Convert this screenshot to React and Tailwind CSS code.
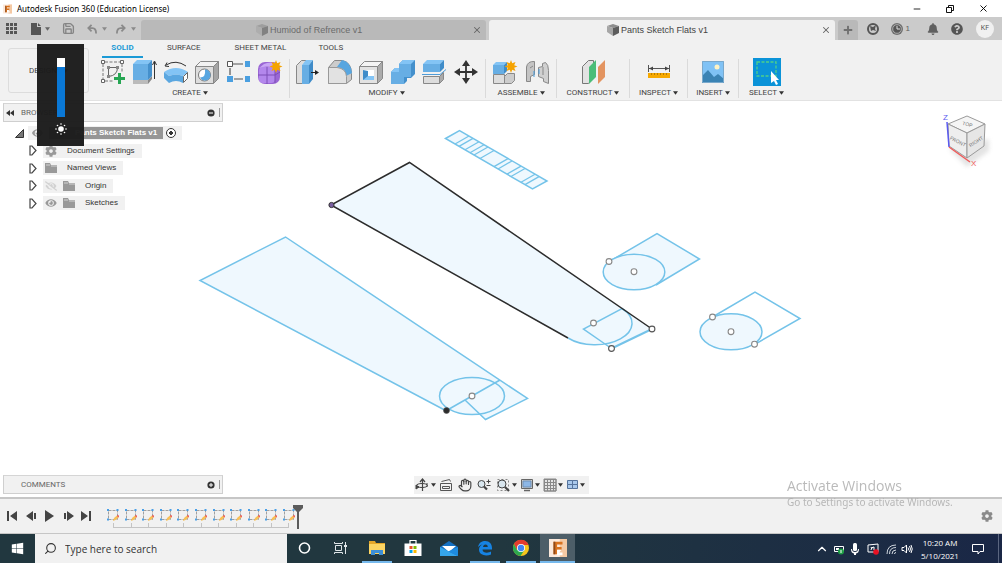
import React from "react";
import { FaCog, FaBell, FaQuestionCircle, FaEye, FaEyeSlash, FaWindows, FaPlus } from "react-icons/fa";
import { Search, X, Minus, ChevronUp, Hand, Save } from "lucide-react";

const Caret = ({ className = "text-[#333]" }) => (
  <svg viewBox="0 0 6 4" className={`h-[4px] w-[5px] shrink-0 ${className}`} fill="currentColor"><path d="M0 0h6L3 4z" /></svg>
);

const FusionLogo = ({ className }) => (
  <svg viewBox="0 0 20 20" className={className}>
    <path d="M0 0h20v20H0z" fill="#fbe9dc" />
    <path d="M12 0h8v20h-8z" fill="#f4c9a4" />
    <path d="M5 3h10v3H9v3h5v3H9v5H5z" fill="#d9731f" />
    <path d="M5 3h2v14H5z" fill="#8f4a1b" />
    <path d="M9 12h5l-3 3h4v3H9z" fill="#fff" />
  </svg>
);

const DocCube = ({ className }) => (
  <svg viewBox="0 0 12 12" className={className}>
    <path d="M0 2 6 0l6 2-6 2z" fill="#8d8d8d" />
    <path d="M0 2l6 2v8L0 8z" fill="#a6a6a6" />
    <path d="M6 4l6-2v7l-6 3z" fill="#5c5c5c" />
  </svg>
);

/* ---------- ribbon icons, 26 x 26 ---------- */
const icons = {
  sketch: (
    <>
      <path d="M3 5v15M5 3h15M5 22h9M22 5v9" stroke="#777" strokeWidth="1" strokeDasharray="3 1.500" fill="none" />
      <g fill="#fff" stroke="#666"><path d="M1.500 1.500h3v3h-3zM20.500 1.500h3v3h-3zM1.500 20.500h3v3h-3z" /></g>
      <path d="M8.500 8.500h9q0 8-9 9z" fill="none" stroke="#666" />
      <path d="M7 7h3v3H7zM16 7h3v3h-3zM7 16h3v3H7z" fill="#888" />
      <path d="M18 14h3v4h4v3h-4v4h-3v-4h-4v-3h4z" fill="#26a653" />
    </>
  ),
  extrude: (
    <>
      <path d="M2 21h15v4H2z" fill="#bbb" /><path d="M17 21l4-4v3l-4 5z" fill="#888" />
      <path d="M2 5h15v16H2z" fill="#67aee4" /><path d="M2 5l4-4h15l-4 4z" fill="#83c4f5" /><path d="M17 5l4-4v16l-4 4z" fill="#4490cc" />
      <path d="M23.500 20V3m-2 3 2-4 2 4" stroke="#333" fill="none" />
    </>
  ),
  revolve: (
    <>
      <path d="M1 13q12-8 24 0l-5 4q-7-3-14 0z" fill="#83c4f5" />
      <path d="M1 13l5 4v7l-5-5zM6 17q7-3 14 0v7q-7-4-14 0z" fill="#5ba7e0" />
      <path d="M20.500 17.500l4-4v6l-4 4z" fill="#fff" stroke="#666" />
      <path d="M3 6q10-6 20 1M2 7l2-3.500M2 7l4 .5" stroke="#333" fill="none" />
    </>
  ),
  hole: (
    <>
      <path d="M1.500 7.500h18v17h-18z" fill="#ddd" stroke="#888" /><path d="M1.500 7.500l5-5h18l-5 5z" fill="#f2f2f2" stroke="#888" /><path d="M19.500 7.500l5-5v17l-5 5z" fill="#a5a5a5" stroke="#888" />
      <circle cx="10.500" cy="16" r="6" fill="#fff" stroke="#777" /><path d="M11 10.500a5.500 5.500 0 1 1-5 8q6 0 5-8z" fill="#58a6e0" />
    </>
  ),
  pattern: (
    <>
      <path d="M7 5h10M8 20h9M4 9v7" stroke="#555" strokeWidth="1.200" />
      <path d="M1.500 2.500h5v5h-5z" fill="#fff" stroke="#555" />
      <path d="M19 2h5v6h-5zM19 17h5v6h-5zM1 17h6v6H1z" fill="#4a9fe0" />
    </>
  ),
  form: (
    <>
      <rect x="1" y="3" width="22" height="22" rx="7" fill="#9a66d4" />
      <rect x="2" y="8" width="16" height="16" rx="4" fill="#b387ec" />
      <path d="M2 9q8-3 16 0l4-4q-9-3-15 0z" fill="#c9a6f5" />
      <path d="M10 8v17M1 16h17l5-3M18 9v15" stroke="#7d4fb6" fill="none" />
      <path d="M19 1l1.200 3.200L23.500 3l-1.300 3.200L25.500 7.500l-3.300 1.200 1.300 3.300-3.300-1.200L19 14l-1.200-3.200-3.300 1.200 1.300-3.300-3.300-1.200 3.300-1.300L14.500 3l3.300 1.200z" fill="#f5a300" />
    </>
  ),
  press: (
    <>
      <path d="M1.500 6.500l5-5h5v23h-10z" fill="#ddd" stroke="#888" />
      <path d="M7 6h7v19H7z" fill="#67aee4" /><path d="M7 6l4-5h7l-4 5z" fill="#83c4f5" /><path d="M14 6l4-5v19l-4 5z" fill="#3f8cc9" />
      <path d="M16 13.500h5" stroke="#222" /><path d="M20 11l4 2.500-4 2.500z" fill="#222" />
    </>
  ),
  fillet: (
    <>
      <path d="M1.500 8.500l6-7h8q9 2 9 13v6l-5 4h-18z" fill="#ccc" stroke="#888" />
      <path d="M10 8l5-7q9 2 10 13l-6 3q0-8-9-9z" fill="#58a6e0" /><path d="M1.500 8.500H10q9 1 9.500 9v7h-18z" fill="#e2e2e2" stroke="#999" />
    </>
  ),
  shell: (
    <>
      <path d="M1.500 7.500h18v17h-18z" fill="#e2e2e2" stroke="#888" /><path d="M1.500 7.500l5-5h18l-5 5z" fill="#f4f4f4" stroke="#888" /><path d="M19.500 7.500l5-5v17l-5 5z" fill="#ababab" stroke="#888" />
      <path d="M5 11h11v10H5z" fill="#fff" /><path d="M5 11l5 1v5l6 4H5z" fill="#3f8cc9" /><path d="M5 21l5-4h6v4z" fill="#83c4f5" />
    </>
  ),
  combine: (
    <>
      <path d="M9 5l4-4h12v14l-4 4h-4v3l-3 3H1V13l4-4h4z" fill="#4490cc" />
      <path d="M9 5h12v13h-7v7H1V13h8z" fill="#67aee4" />
      <path d="M9 5l4-4h12l-4 4zM1 13l4-4h4v4z" fill="#83c4f5" />
    </>
  ),
  split: (
    <>
      <path d="M2 5h17v8H2z" fill="#67aee4" /><path d="M2 5l4-4h17l-4 4z" fill="#83c4f5" /><path d="M19 5l4-4v8l-4 4z" fill="#3f8cc9" />
      <path d="M1 15.500h18l6-5" stroke="#4e9cd8" fill="none" />
      <path d="M2.500 17.500h16v7h-16z" fill="#ddd" stroke="#888" /><path d="M18.500 17.500l4-4v7l-4 4z" fill="#aaa" stroke="#888" />
    </>
  ),
  move: (
    <>
      <path d="M13 4v18M4 13h18" stroke="#333" strokeWidth="1.800" />
      <path d="M13 1l4 6H9zM13 25l4-6H9zM1 13l6-4v8zM25 13l-6-4v8z" fill="#333" />
    </>
  ),
  component: (
    <>
      <path d="M1.500 15.500h11v9h-11z" fill="#ddd" stroke="#888" /><path d="M12.500 17.500l3-3h7v7l-3 3h-7z" fill="#ccc" stroke="#888" />
      <path d="M1 6h11v9H1z" fill="#67aee4" /><path d="M1 6l3-3h11l-3 3z" fill="#83c4f5" /><path d="M12 6l3-3v9l-3 3z" fill="#3f8cc9" />
      <path d="M19 1l1.200 3.200L23.500 3l-1.300 3.200L25.500 7.500l-3.300 1.200 1.300 3.300-3.300-1.200L19 14l-1.200-3.200-3.300 1.200 1.300-3.300-3.300-1.200 3.300-1.300L14.500 3l3.300 1.200z" fill="#f5a300" />
    </>
  ),
  joint: (
    <>
      <path d="M2.500 22.500V8q1-6 8-5.500v13l-4 2v5z" fill="#c4c4c4" stroke="#888" /><path d="M14.500 8.500l4-1v-3l3-1q3 2 3 8v13l-5-2v-3l-5-2z" fill="#d0d0d0" stroke="#888" />
      <path d="M6 9l3-2M19 8v8" stroke="#888" fill="none" /><path d="M10 12v6M15 10v5" stroke="#4a9fe0" />
    </>
  ),
  construct: (
    <>
      <path d="M2.500 7.500l6-6h5v17l-5 6h-6z" fill="#e2e2e2" stroke="#777" /><path d="M9 8l7-7v17l-7 7z" fill="#4bbd78" /><path d="M18 8l7-7v17l-7 7z" fill="#e39460" />
    </>
  ),
  measure: (
    <>
      <path d="M2.500 6v7M23.500 6v7M3 9.500h20" stroke="#555" /><path d="M3 9.500l4-2v4zM23 9.500l-4-2v4z" fill="#444" />
      <path d="M2 14h22v5H2z" fill="#f7a900" /><path d="M5.500 14v2M8.500 14v2M11.500 14v2M14.500 14v2M17.500 14v2M20.500 14v2" stroke="#b87c00" />
    </>
  ),
  insert: (
    <>
      <path d="M2 2h22v22H2z" fill="#80c2f5" /><circle cx="17" cy="8" r="2.500" fill="#fff3c4" />
      <path d="M2 17l6-6 6 7 4-3 6 5v4H2z" fill="#3b83b4" /><path d="M2.500 2.500h21v21h-21z" stroke="#7aa9cc" fill="none" />
    </>
  ),
  select: (
    <>
      <path d="M3 3h19v14H3z" fill="none" stroke="#4fd08a" strokeWidth="1.300" strokeDasharray="3 1.500" />
      <path d="M17 12v12l3-2 2 4 2-1-2-4h3z" fill="#fff" />
    </>
  ),
};

const RibbonIcon = ({ name }) => (
  <button type="button" aria-label={name} className={name === "select" ? "bg-[#0b93d8] p-px" : ""}>
    <svg viewBox="0 0 26 26" className="h-[26px] w-[26px]">{icons[name]}</svg>
  </button>
);

const groups = [
  { label: "CREATE", list: ["sketch", "extrude", "revolve", "hole", "pattern", "form"], box: "w-[193px] border-r", row: "justify-between pl-[3px] pr-[6px]", text: "pr-[6px]" },
  { label: "MODIFY", list: ["press", "fillet", "shell", "combine", "split", "move"], box: "w-[196px] border-r", row: "justify-between pl-[5px] pr-[6px]", text: "pr-[2px]" },
  { label: "ASSEMBLE", list: ["component", "joint"], box: "w-[71px] border-r", row: "justify-center gap-[6px]" },
  { label: "CONSTRUCT", list: ["construct"], box: "w-[73px] border-r", row: "justify-center" },
  { label: "INSPECT", list: ["measure"], box: "w-[58px] border-r", row: "justify-center" },
  { label: "INSERT", list: ["insert"], box: "w-[51px] border-r", row: "justify-center" },
  { label: "SELECT", list: ["select"], box: "w-[55px]", row: "justify-center" },
];

function TitleBar() {
  return (
    <header className="flex h-[17px] items-center bg-white pl-[3px] text-black">
      <FusionLogo className="h-[10px] w-[9px]" />
      <h1 className="ml-[5px] flex-1 font-['Noto_Sans',sans-serif] text-[8px] leading-[12px]">Autodesk Fusion 360 (Education License)</h1>
      <div className="flex items-center gap-[23px] pr-[13px]">
        <button type="button" aria-label="Minimize"><Minus className="h-[10px] w-[10px]" strokeWidth={2} /></button>
        <button type="button" aria-label="Restore">
          <svg viewBox="0 0 10 10" className="h-[10px] w-[10px]" fill="none" stroke="#111"><path d="M1.500 3.500h5v5h-5zM3.500 3V1.500h5v5H7" /></svg>
        </button>
        <button type="button" aria-label="Close"><X className="h-[11px] w-[11px]" strokeWidth={2} /></button>
      </div>
    </header>
  );
}

function DocTab({ title, active }) {
  return (
    <div className={`flex h-[20px] flex-1 items-center rounded-t-[3px] pr-[4px] ${active ? "bg-[#f0f0f0] text-[#444]" : "bg-[#b9b9b9] text-[#6b6b6b]"}`}>
      <button type="button" className="flex flex-1 items-center justify-center gap-[2px] pl-[5px] font-['Liberation_Sans',sans-serif] text-[9px] leading-[12px]">
        <DocCube className={`h-[12px] w-[12px] ${active ? "" : "opacity-60"}`} />
        {title}
      </button>
      <button type="button" aria-label="Close tab"><X className="h-[10px] w-[10px] text-[#666]" strokeWidth={2.5} /></button>
    </div>
  );
}

function TabBar() {
  return (
    <nav className="flex h-[23px] items-end bg-[#cbcbcb] text-[#606060]">
      <div className="flex h-[23px] w-[141px] items-center">
        <button type="button" aria-label="Data panel" className="ml-[6px]">
          <svg viewBox="0 0 11 11" className="h-[11px] w-[11px]" fill="#555"><path d="M0 0h3v3H0zM4 0h3v3H4zM8 0h3v3H8zM0 4h3v3H0zM4 4h3v3H4zM8 4h3v3H8zM0 8h3v3H0zM4 8h3v3H4zM8 8h3v3H8z" /></svg>
        </button>
        <button type="button" aria-label="File" className="ml-[14px] flex items-center gap-[4px]">
          <svg viewBox="0 0 10 12" className="h-[12px] w-[10px]" fill="#555"><path d="M0 0h6v4h4v8H0z" /><path d="M7 0l3 3H7z" /></svg>
          <Caret className="text-[#666]" />
        </button>
        <button type="button" aria-label="Save" className="ml-[12px] text-[#858585]"><Save className="h-[13px] w-[13px]" strokeWidth={2.5} /></button>
        <button type="button" aria-label="Undo" className="ml-[12px] flex items-center gap-[5px] text-[#8a8a8a]">
          <svg viewBox="0 0 11 11" className="h-[10px] w-[10px]" fill="none" stroke="currentColor" strokeWidth="2"><path d="M5 1 1.500 4.500 5 8M2 4.500h4q4 0 4 6" /></svg>
          <Caret className="text-[#8a8a8a]" />
        </button>
        <button type="button" aria-label="Redo" className="ml-[9px] flex items-center gap-[5px] text-[#8a8a8a]">
          <svg viewBox="0 0 11 11" className="h-[10px] w-[10px]" fill="none" stroke="currentColor" strokeWidth="2"><path d="M6 1l3.500 3.500L6 8M9 4.500H5q-4 0-4 6" /></svg>
          <Caret className="text-[#8a8a8a]" />
        </button>
      </div>
      <div className="flex flex-1 gap-[3px]">
        <DocTab title="Humiod of Refrence v1" />
        <DocTab title="Pants Sketch Flats v1" active />
      </div>
      <button type="button" aria-label="New tab" className="ml-[3px] flex h-[20px] w-[20px] items-center justify-center rounded-t-[3px] bg-[#b9b9b9]">
        <FaPlus className="h-[10px] w-[10px] text-[#707070]" />
      </button>
      <div className="flex h-[23px] items-center pl-[9px] pr-[8px]">
        <button type="button" aria-label="Extensions">
          <svg viewBox="0 0 12 12" className="h-[12px] w-[12px]"><circle cx="6" cy="6" r="5" fill="#cbcbcb" stroke="#555" strokeWidth="2" /><path d="M3 3l3 1 3-2-1 4 1 2-3-1-2 1z" fill="#555" /></svg>
        </button>
        <button type="button" className="ml-[12px] flex items-center gap-[3px] font-['Liberation_Sans',sans-serif] text-[8px]">
          <svg viewBox="0 0 12 12" className="h-[12px] w-[12px]"><circle cx="6" cy="6" r="6" fill="#707070" /><circle cx="6" cy="6" r="4.300" fill="#555" stroke="#bbb" strokeWidth=".8" /><path d="M6 3v3h3" stroke="#ddd" fill="none" /></svg>
          1
        </button>
        <button type="button" aria-label="Notifications" className="ml-[17px]"><FaBell className="h-[12px] w-[12px]" /></button>
        <button type="button" aria-label="Help" className="ml-[12px]"><FaQuestionCircle className="h-[12px] w-[12px] text-[#555]" /></button>
        <button type="button" className="ml-[13px] flex h-[18px] w-[18px] items-center justify-center rounded-full bg-[#f0f0f0] font-['Roboto',sans-serif] text-[7px] text-[#555]">KF</button>
      </div>
    </nav>
  );
}

function Ribbon() {
  return (
    <section className="flex h-[61px] border-b border-[#e2e2e2] bg-[#f1f1f1] font-['Roboto',sans-serif] text-[8px] leading-[10px] text-[#444]">
      <button type="button" className="ml-[8px] mt-[8px] flex h-[45px] w-[81px] items-center justify-center gap-[6px] rounded-[3px] border border-[#dcdcdc]">
        DESIGN <Caret />
      </button>
      <div className="ml-[8px] flex flex-1 flex-col">
        <div className="flex h-[18px] pt-[3px]">
          <button type="button" className="ml-[5px] w-[41px] border-b-2 border-[#1b9ad6] pb-[3px] font-bold text-[#1b9ad6]">SOLID</button>
          <button type="button" className="ml-[24px] pb-[5px]">SURFACE</button>
          <button type="button" className="ml-[34px] pb-[5px]">SHEET METAL</button>
          <button type="button" className="ml-[32px] pb-[5px]">TOOLS</button>
        </div>
        <div className="flex pt-px">
          {groups.map((g) => (
            <div key={g.label} className={`flex h-[39px] flex-col border-[#dadada] ${g.box}`}>
              <div className={`flex h-[26px] items-center ${g.row}`}>
                {g.list.map((n) => <RibbonIcon key={n} name={n} />)}
              </div>
              <button type="button" className={`mt-[3px] flex items-center justify-center gap-[2px] ${g.text ?? ""}`}>{g.label}<Caret /></button>
            </div>
          ))}
        </div>
      </div>
    </section>
  );
}

const Folder = () => (
  <svg viewBox="0 0 12 10" className="h-[10px] w-[12px] shrink-0" fill="#999"><path d="M0 0h5l1 2h6v8H0z" /><path d="M1 2h4M6 3h6" stroke="#eee" strokeWidth=".7" /></svg>
);
const Expander = () => (
  <svg viewBox="0 0 8 11" className="h-[11px] w-[8px]" fill="#fff" stroke="#444" strokeWidth="1.200"><path d="M1 1h2l4 4.500L3 10H1z" /></svg>
);

function TreeRow({ children, label }) {
  return (
    <li className="flex h-[14px] items-center pl-[26px]">
      <button type="button" aria-label={`Expand ${label}`} className="mr-[6px]"><Expander /></button>
      <div className="flex h-[14px] items-center bg-[#f1f1f1] pl-[2px] pr-[7px]">
        {children}
        <span>{label}</span>
      </div>
    </li>
  );
}

function PanelHeader({ title, left, sign }) {
  return (
    <div className="flex h-[19px] items-center border border-t-[#d5d5d5] border-[#cfcfcf] bg-[#f1f1f1] font-['Roboto',sans-serif] text-[8px] leading-[10px] text-[#666]">
      <span className="flex w-[17px] pl-[2px]">{left}</span>
      <h2 className="flex-1">{title}</h2>
      <button type="button" aria-label={`Toggle ${title}`} className="mr-[4px]">
        <svg viewBox="0 0 8 8" className="h-[8px] w-[8px]"><circle cx="4" cy="4" r="3.600" fill="#333" /><path d={sign} stroke="#fff" /></svg>
      </button>
      <span className="mr-[1px] h-[9px] w-[2px] border-l border-[#999]" />
    </div>
  );
}

function Browser() {
  return (
    <aside className="w-[220px] text-[#333]">
      <PanelHeader
        title="BROWSER"
        sign="M2 4h4"
        left={<svg viewBox="0 0 8 6" className="h-[6px] w-[8px]" fill="#333"><path d="M4 0v6L0 3zM8 0v6L4 3z" /></svg>}
      />
      <ul className="mt-[4px] flex h-[84px] flex-col justify-between font-['Liberation_Sans',sans-serif] text-[8px] leading-[10px]">
        <li className="flex h-[14px] items-center pl-[12px]">
          <button type="button" aria-label="Collapse root">
            <svg viewBox="0 0 9 9" className="h-[9px] w-[9px]"><path d="M8.500.5v8h-8z" fill="#777" stroke="#333" /></svg>
          </button>
          <div className="ml-[4px] flex h-[14px] items-center bg-[#f1f1f1] pl-[4px] pr-[6px]">
            <FaEye className="h-[10px] w-[11px] text-[#999]" />
            <span className="ml-[6px] flex h-[12px] items-center bg-[#969696] pl-[6px] pr-[6px] font-bold text-white">
              <DocCube className="mr-[11px] h-[9px] w-[9px]" />Pants Sketch Flats v1
            </span>
            <input type="radio" aria-label="Activate component" defaultChecked className="ml-[3px] h-[10px] w-[10px] appearance-none rounded-full border border-[#333] bg-[radial-gradient(circle,#333_2px,#fff_2px)]" />
          </div>
        </li>
        <TreeRow label="Document Settings"><FaCog className="mr-[10px] h-[12px] w-[12px] text-[#999]" /></TreeRow>
        <TreeRow label="Named Views"><span className="mr-[10px]"><Folder /></span></TreeRow>
        <TreeRow label="Origin"><FaEyeSlash className="mr-[6px] h-[10px] w-[12px] text-[#d2d2d2]" /><span className="mr-[10px]"><Folder /></span></TreeRow>
        <TreeRow label="Sketches"><FaEye className="mr-[6px] h-[10px] w-[12px] text-[#999]" /><span className="mr-[10px]"><Folder /></span></TreeRow>
      </ul>
    </aside>
  );
}

const stripLines = [455, 459, 465, 470, 474, 480, 494, 498, 507, 511, 521, 525];

function SketchView() {
  return (
    <svg viewBox="0 101 1002 396" preserveAspectRatio="xMidYMid meet" className="absolute inset-0 h-full w-full" fill="none" stroke="#74c3e9" strokeWidth="1.500">
      <path d="M445.500 138.500l14-8 87.500 50.500-14.500 8z" fill="#eff8fe" />
      {stripLines.map((x) => {
        const y = 138.5 + (x - 445.5) * 0.58;
        return <path key={x} d={`M${x} ${y}l14-8`} strokeWidth="1.300" />;
      })}

      <path d="M331 205l78.500-42.500L652 329l-40.500 19.500-8-5Q584 346 568 338z" fill="#eff8fe" stroke="none" />
      <path d="M568 338A37 21.500 0 0 0 622 308.500L583.500 329l28 19.500" />
      <path d="M611.500 348.500L652 329" strokeWidth="2" />
      <path d="M568 338L331 205l78.500-42.500L652 329" stroke="#2c2c2c" />

      <path d="M285.500 237L200 280.500 446.500 411 465 400l20.500 19.500 42-21z" fill="#eff8fe" stroke="none" />
      <ellipse cx="472" cy="396" rx="32.500" ry="18.500" fill="#eff8fe" />
      <path d="M446.500 411L200 280.500 285.500 237l242 161.500-42 21L465 400M446.500 410.500L500 380" />

      <path d="M609.500 261.500l47.500-28 42.500 25.500-43.500 26" fill="#eff8fe" />
      <ellipse cx="634" cy="272" rx="30.800" ry="17.800" fill="#eff8fe" />

      <path d="M712.500 317l42.500-25 45 26.500-45.500 26" />
      <ellipse cx="731" cy="331.800" rx="31" ry="18" fill="#eff8fe" />

      <g fill="#fff" stroke="#888" strokeWidth="1.100">
        <circle cx="593.500" cy="323" r="2.900" /><circle cx="611.500" cy="348.500" r="2.900" stroke="#555" /><circle cx="652" cy="329" r="2.900" stroke="#555" />
        <circle cx="472" cy="396" r="2.900" /><circle cx="609" cy="261.500" r="2.900" /><circle cx="634" cy="271.700" r="2.900" />
        <circle cx="712.500" cy="317" r="2.900" /><circle cx="731" cy="331.700" r="2.900" /><circle cx="754.500" cy="344.200" r="2.900" />
      </g>
      <circle cx="331.500" cy="205" r="2.600" fill="#7a5fa0" stroke="#333" strokeWidth="1" />
      <circle cx="446.500" cy="410.500" r="3" fill="#2c2c2c" stroke="#555" strokeWidth=".6" />
    </svg>
  );
}

function ViewCube() {
  return (
    <svg viewBox="0 0 52 62" className="absolute right-[9px] top-[8px] h-[62px] w-[52px]" fontFamily="Liberation Sans, sans-serif">
      <defs><filter id="cubeShadow"><feGaussianBlur stdDeviation="2" /></filter></defs>
      <path d="M8 40l18 18 22-16V30z" fill="#bbb" opacity=".4" filter="url(#cubeShadow)" />
      <g stroke="#9a9a9a" strokeLinejoin="round">
        <path d="M7 15L26 7l18 8-18 9z" fill="#f5f5f5" />
        <path d="M7 15l19 9v25L8 37z" fill="#eee" />
        <path d="M26 24l18-9-1 22-17 12z" fill="#e6e6e6" />
      </g>
      <g fontSize="5" fill="#777" textAnchor="middle">
        <text transform="translate(26 17) rotate(14)">TOP</text>
        <text transform="translate(16 34) rotate(28)">FRONT</text>
        <text transform="translate(36 34) rotate(-33)">RIGHT</text>
      </g>
      <path d="M6 13l2 25" stroke="#5a5af0" strokeWidth="1.500" /><path d="M8 38l21 15" stroke="#ef5a5a" strokeWidth="1.500" />
      <text x="2" y="11" fontSize="8" fill="#5a5af0">Z</text>
      <text x="30" y="57" fontSize="8" fill="#ef5a5a">X</text>
    </svg>
  );
}

function NavBar() {
  const cls = "h-[14px] w-[14px]";
  return (
    <div className="flex h-[18px] items-center bg-[#f1f1f1] pl-[1px] pr-[4px] text-[#444]">
      <button type="button" aria-label="Orbit" className="flex items-center gap-[2px]">
        <svg viewBox="0 0 14 14" className={cls} fill="none" stroke="#444"><path d="M7.500 2v11M5 4l2.500-3L10 4" strokeWidth="1.200" /><ellipse cx="7" cy="7.500" rx="5.500" ry="2" /><path d="M1 7l3 2-3 2zM12 5v4" fill="#444" /></svg>
        <Caret />
      </button>
      <button type="button" aria-label="Look at" className="ml-[3px]">
        <svg viewBox="0 0 14 14" className={cls} fill="none" stroke="#555"><path d="M1.500 5.500h11v7h-11zM3.500 8.500h7v2h-7zM2.500 3.500l8-2 1 2" /></svg>
      </button>
      <button type="button" aria-label="Pan" className="ml-[5px]"><Hand className={cls} strokeWidth={2} /></button>
      <button type="button" aria-label="Zoom" className="ml-[5px]">
        <svg viewBox="0 0 14 14" className={cls} fill="none" stroke="#444"><circle cx="4.500" cy="6" r="3.500" fill="#d9e6ee" /><path d="M7 8.500l3 3" strokeWidth="2.200" /><path d="M9.500 3.500h4M11.500 1.500v4M9.500 7.500h4" /></svg>
      </button>
      <button type="button" aria-label="Fit" className="ml-[5px] flex items-center gap-[2px]">
        <svg viewBox="0 0 14 14" className={cls} fill="none" stroke="#444"><path d="M1.500 1.500h11v11h-11z" stroke="#888" strokeDasharray="2 2" /><circle cx="6" cy="6" r="4" fill="#d9e6ee" /><path d="M9 9l4 4" strokeWidth="2.200" /></svg>
        <Caret />
      </button>
      <button type="button" aria-label="Display" className="ml-[3px] flex items-center gap-px">
        <svg viewBox="0 0 14 14" className={cls} fill="none" stroke="#666"><path d="M1.500 1.500h11v9h-11z" fill="#ccc" /><path d="M3 3h8v6H3z" fill="#8db7e6" stroke="#6f8fb5" /><path d="M4 12.500h6" strokeWidth="1.500" /></svg>
        <Caret />
      </button>
      <button type="button" aria-label="Grid" className="ml-[3px] flex items-center gap-px">
        <svg viewBox="0 0 14 14" className={cls} stroke="#888"><path d="M1 1h12v12H1z" fill="#e4e4e4" /><path d="M1 1.500h12M1 4.500h12M1 7.500h12M1 10.500h12M1 13h12M1.500 1v12M4.500 1v12M7.500 1v12M10.500 1v12M13 1v12" /></svg>
        <Caret />
      </button>
      <button type="button" aria-label="Viewports" className="ml-[3px] flex items-center gap-px">
        <svg viewBox="0 0 13 14" className="h-[14px] w-[13px]" fill="#a9c8ec" stroke="#55739c"><path d="M1.500 2.500h5v4h-5zM6.500 2.500h5v4h-5zM1.500 6.500h5v4h-5zM6.500 6.500h5v4h-5z" /></svg>
        <Caret />
      </button>
    </div>
  );
}

const playback = [
  ["First", "M1 1h2v10H1zM11 1v10L4 6z"],
  ["Back", "M8 1v10L1 6zM9 3h2v6H9z"],
  ["Play", "M2 0v12l9-6z"],
  ["Forward", "M5 1v10l7-5zM2 3h2v6H2z"],
  ["Last", "M9 1h2v10H9zM1 1v10l7-5z"],
];

function Timeline() {
  return (
    <section className="flex h-[37px] items-start border-b border-t-2 border-[#c6c6c6] bg-[#f1f1f1]">
      <div className="flex w-[86px] justify-between pl-0 pt-[11px] ml-[6px]">
        {playback.map(([name, d]) => (
          <button key={name} type="button" aria-label={name} className="flex w-[12px] justify-center">
            <svg viewBox="0 0 12 12" className="h-[12px] w-[12px]" fill="#444"><path d={d} /></svg>
          </button>
        ))}
      </div>
      <div className="ml-[15px] w-[188px] pt-[10px]">
        <ul className="flex justify-between">
          {Array.from({ length: 11 }, (_, i) => (
            <li key={i}>
              <button type="button" aria-label={`Sketch ${i + 1}`} className="block">
                <svg viewBox="0 0 12 12" className="h-[12px] w-[12px]">
                  <path d="M1.500 1.500h9v9h-9z" fill="none" stroke="#a0a0a0" strokeDasharray="3 1" />
                  <path d="M0 0h2v2H0zM9.500 0h2v2h-2zM0 9.500h2v2H0z" fill="#4a9fe6" />
                  <path d="M6 12l1-3 3-2.500 1.500 2L8.500 11z" fill="#f8c056" /><path d="M10 6.500l1.500-.5.500 2-1 .5z" fill="#ee4a4a" />
                </svg>
              </button>
            </li>
          ))}
        </ul>
        <div className="mx-[6px] flex h-[7px] justify-between border-b border-[#c4c4c4]">
          {Array.from({ length: 11 }, (_, i) => <span key={i} className="mt-[2px] w-px bg-[#c4c4c4]" />)}
        </div>
      </div>
      <svg viewBox="0 0 10 24" className="-ml-[2px] mt-[6px] h-[24px] w-[10px]" fill="#5c5c5c"><path d="M0 0h10v3L6 7v17H4V7L0 3z" /></svg>
      <button type="button" aria-label="Timeline settings" className="ml-auto mr-[9px] mt-[11px]"><FaCog className="h-[12px] w-[12px] text-[#8a8a8a]" /></button>
    </section>
  );
}

const apps = [
  { name: "Cortana", art: <circle cx="9.500" cy="10" r="5" fill="none" stroke="#fff" strokeWidth="1.600" /> },
  { name: "Task view", art: <g fill="none" stroke="#dfe5e8"><path d="M4.500 7.500h6v5h-6zM3.500 4v1.500h8V4M3.500 16v-1.500h8V16M14.500 4v12" /><path d="M13 8h3" strokeWidth="2" /></g> },
  { name: "File Explorer", open: true, art: <><path d="M2 3h6l1 2h9v11H2z" fill="#e5a72a" /><path d="M2 6h16v10H2z" fill="#fcd462" /><path d="M4 17v-5h12v5h-4v-2H8v2z" fill="#3d8fd6" /></> },
  { name: "Store", art: <><path d="M7 6V2.500h6V6" fill="none" stroke="#fff" strokeWidth="1.200" /><path d="M1.500 5.500h17v12.500h-17z" fill="#fff" /><path d="M6.500 8h3v3h-3z" fill="#e8502b" /><path d="M10.500 8h3v3h-3z" fill="#7fba00" /><path d="M6.500 12h3v3h-3z" fill="#00a4ef" /><path d="M10.500 12h3v3h-3z" fill="#ffb900" /></> },
  { name: "Mail", art: <><path d="M1 9l9-6 9 6v9H1z" fill="#1471c4" /><path d="M3 8h14l-7 6z" fill="#fff" /><path d="M1 9l18 9H1z" fill="#35a6ec" /><path d="M19 9v9L9 13.500z" fill="#1e8be0" /></> },
  { name: "Edge", open: true, art: <path d="M3 9C4 4.500 7 3 10.300 3 14.500 3 17 6 17 10v1.500H7.500c0 3.500 5.500 4 8.500 2v3c-5 2-12 .8-12-5 0-2.500 1.500-4 3.500-5C5 7 3 9 3 9zm5 0h4.800c0-3.300-4.300-3.300-4.800 0z" fill="#1683e2" /> },
  { name: "Chrome", open: true, art: <><circle cx="10" cy="10" r="8" fill="#f6c51c" /><path d="M3 6a8 8 0 0 1 14 0l.5 1H10L6 12z" fill="#e33b2e" /><path d="M3 6a8 8 0 0 0 6.500 12l4-6L6 12z" fill="#2da94f" /><circle cx="10" cy="10" r="4" fill="#fff" /><circle cx="10" cy="10" r="3.200" fill="#4285f4" /></> },
];

function Taskbar() {
  return (
    <footer className="flex h-[29px] bg-linear-to-r from-[#21373f] from-50% to-[#1a2746] font-['Open_Sans',sans-serif] text-white">
      <button type="button" aria-label="Start" className="flex w-[35px] items-center justify-center"><FaWindows className="h-[13px] w-[13px]" /></button>
      <label className="flex w-[252px] items-center bg-[#f1f1f1] pl-[9px] text-[#333]">
        <Search className="h-[13px] w-[13px] -scale-x-100" strokeWidth={2} />
        <input type="text" aria-label="Search" placeholder="Type here to search" className="ml-[8px] w-[200px] bg-transparent text-[10px] leading-[14px] outline-none placeholder:text-[#333] placeholder:opacity-100" />
      </label>
      {apps.map((a) => (
        <button key={a.name} type="button" aria-label={a.name} className="flex w-[36px] flex-col items-center justify-between">
          <svg viewBox="0 0 20 20" className="mt-[4px] h-[20px] w-[20px]">{a.art}</svg>
          <span className={`h-[2px] w-[30px] ${a.open ? "bg-[#76b9ed]" : ""}`} />
        </button>
      ))}
      <button type="button" aria-label="Fusion 360" className="ml-px flex w-[35px] flex-col items-center justify-between bg-[#4d5e68]">
        <FusionLogo className="mt-[5px] h-[18px] w-[18px]" />
        <span className="h-[2px] w-full bg-[#76b9ed]" />
      </button>
      <div className="ml-auto flex items-center">
        <button type="button" aria-label="Hidden icons"><ChevronUp className="h-[14px] w-[14px]" strokeWidth={2} /></button>
        <svg viewBox="0 0 12 12" className="ml-[4px] h-[12px] w-[12px]"><path d="M1.500 3.500h9v5h-9z" fill="none" stroke="#fff" /><path d="M3 5h3v2H3z" fill="#fff" /><circle cx="8" cy="8.500" r="3" fill="#1fa045" /><path d="M8 7v3" stroke="#fff" /></svg>
        <svg viewBox="0 0 8 12" className="ml-[6px] h-[12px] w-[8px]" fill="#fff"><rect x="2" y="0" width="4" height="8" rx="1.500" /><path d="M0 6h1q0 3 3 3t3-3h1q0 4-3 4.500V12H3v-1.500Q0 10 0 6z" /></svg>
        <svg viewBox="0 0 12 12" className="ml-[8px] h-[12px] w-[12px]"><path d="M1 2l10-1v8H1z" fill="none" stroke="#fff" /><path d="M4 7q0-3 3-3v3M4 4l1 2" fill="none" stroke="#fff" /><circle cx="9" cy="9" r="2.800" fill="#e81123" /></svg>
        <svg viewBox="0 0 12 12" className="ml-[6px] h-[12px] w-[12px]" fill="none" stroke="#cdd4dc"><path d="M2 11Q2 2 11 2M4.500 11q0-6.500 6.500-6.500M7 11q0-4 4-4M9.500 11q0-1.500 1.500-1.500" /></svg>
        <svg viewBox="0 0 12 12" className="ml-[4px] h-[12px] w-[12px]" fill="none" stroke="#fff"><path d="M1 4.500h2l2.500-2.500v8L3 7.500H1zM7 4.500q1 1.500 0 3M8.500 3q2 3 0 6M10 2q2.500 4 0 8" /></svg>
        <time className="ml-[8px] w-[38px] text-center text-[8px] leading-[13px]">10:20 AM<br />5/10/2021</time>
        <button type="button" aria-label="Action center" className="ml-[13px]">
          <svg viewBox="0 0 12 12" className="h-[12px] w-[12px]" fill="none" stroke="#fff"><path d="M.5 1.500h11v7H8L6 11V8.500H.5z" /></svg>
        </button>
        <span className="ml-[14px] mr-[3px] h-[29px] w-px bg-[#5b6680]" />
      </div>
    </footer>
  );
}

export default function App() {
  return (
    <div className="relative flex min-h-screen flex-col overflow-hidden bg-white">
      <TitleBar />
      <TabBar />
      <Ribbon />
      <main className="relative flex flex-1 flex-col justify-between bg-white">
        <SketchView />
        <ViewCube />
        <div className="relative pl-[3px] pt-[2px]"><Browser /></div>
        <div className="relative flex pb-[3px] pl-[3px]">
          <div className="w-[220px]">
            <PanelHeader title="COMMENTS" sign="M2 4h4M4 2v4" />
          </div>
          <div className="flex flex-1 items-end pl-[191px]"><NavBar /></div>
        </div>
      </main>
      <Timeline />
      <Taskbar />

      <div className="pointer-events-none absolute bottom-[54px] right-[41px] w-[174px] font-['Open_Sans',sans-serif] text-[#a9a9a9] opacity-80">
        <p className="text-[14px] leading-[18px]">Activate Windows</p>
        <p className="whitespace-nowrap font-['Noto_Sans',sans-serif] text-[10px] leading-[14px]">Go to Settings to activate Windows.</p>
      </div>

      <div className="absolute left-[37px] top-[44px] flex h-[102px] w-[47px] flex-col items-center bg-[#1b1b1b]/97">
        <div className="mt-[14px] flex h-[59px] w-[8px] flex-col bg-[#0a78d6]">
          <span className="h-[9px] bg-white" />
        </div>
        <svg viewBox="0 0 12 12" className="mt-[6px] h-[12px] w-[12px]" fill="#fff">
          <circle cx="6" cy="6" r="2.800" />
          <circle cx="6" cy="1" r=".8" /><circle cx="6" cy="11" r=".8" /><circle cx="1" cy="6" r=".8" /><circle cx="11" cy="6" r=".8" />
          <circle cx="2.500" cy="2.500" r=".8" /><circle cx="9.500" cy="2.500" r=".8" /><circle cx="2.500" cy="9.500" r=".8" /><circle cx="9.500" cy="9.500" r=".8" />
        </svg>
      </div>
    </div>
  );
}
